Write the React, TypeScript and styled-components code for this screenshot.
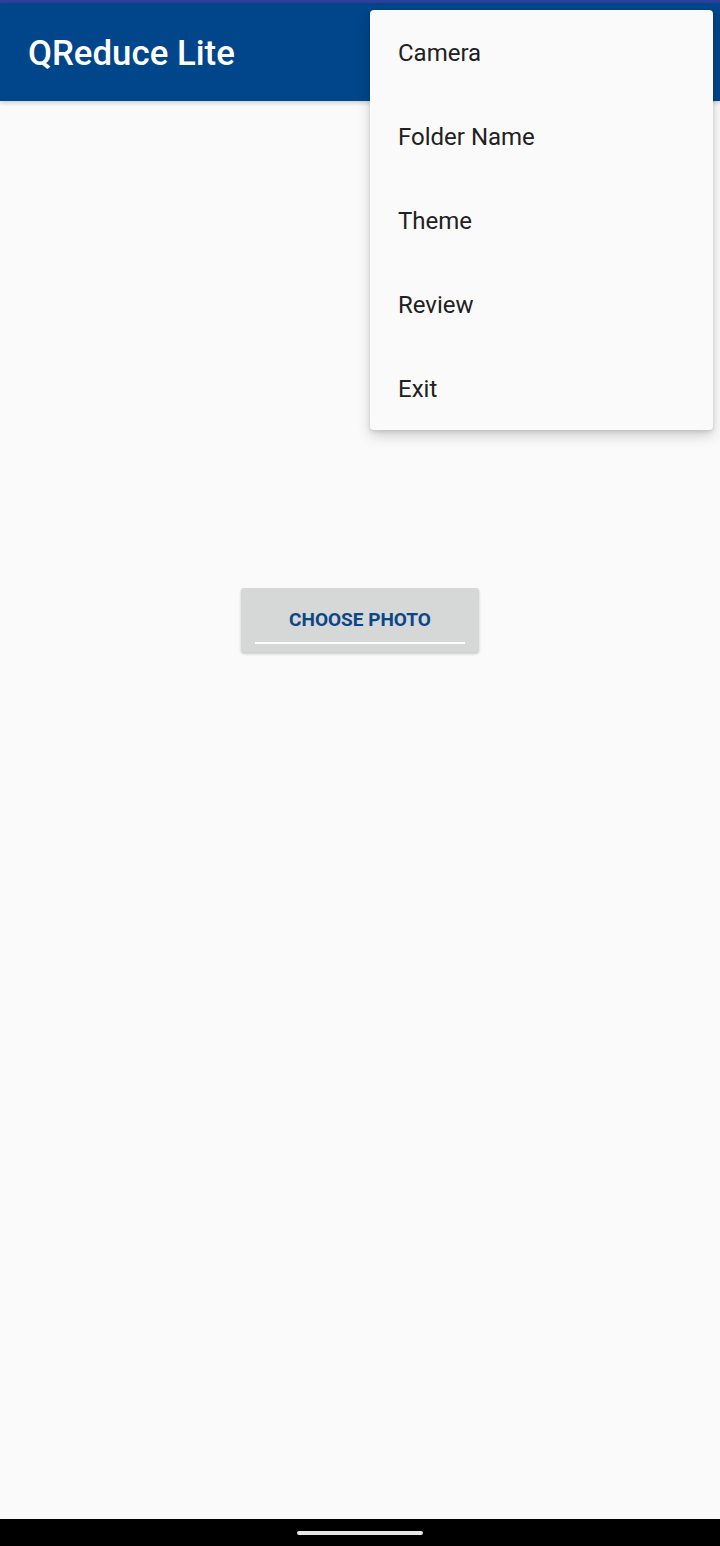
import * as React from "react";
import styled, { createGlobalStyle } from "styled-components";

const menuItems = ["Camera", "Folder Name", "Theme", "Review", "Exit"];

function App() {
  return (
    <>
      <GlobalStyle />
      <Screen>
        <StatusBar />
        <AppBar>
          <Title>QReduce Lite</Title>
        </AppBar>
        <Content>
          <ChooseButton>
            <ButtonText>CHOOSE PHOTO</ButtonText>
            <ButtonLine />
          </ChooseButton>
        </Content>
        <NavBar>
          <HomeIndicator />
        </NavBar>
        <Menu>
          {menuItems.map((item) => (
            <MenuItem key={item}>{item}</MenuItem>
          ))}
        </Menu>
      </Screen>
    </>
  );
}

export default App;

const GlobalStyle = createGlobalStyle`
  html, body {
    margin: 0;
    padding: 0;
    background: #fafafa;
  }
  body {
    font-family: Roboto, "Liberation Sans", sans-serif;
  }
`;

const Screen = styled.div`
  position: relative;
  display: flex;
  flex-direction: column;
  width: 720px;
  height: 1546px;
  overflow: hidden;
  background: #fafafa;
`;

const StatusBar = styled.div`
  height: 3px;
  background: #2d3f9c;
`;

const AppBar = styled.header`
  display: flex;
  align-items: center;
  height: 98px;
  padding: 0 28px;
  background: #01468a;
  box-shadow: 0 2px 4px rgba(0, 0, 0, 0.18);
  z-index: 1;
`;

const Title = styled.h1`
  margin: 2px 0 0;
  font-family: Roboto, "Liberation Sans", sans-serif;
  font-size: 34.8px;
  font-weight: 500;
  color: #ffffff;
`;

const Content = styled.main`
  flex: 1;
  display: flex;
  flex-direction: column;
  align-items: center;
  padding-top: 487px;
`;

const ChooseButton = styled.button`
  position: relative;
  display: flex;
  align-items: center;
  justify-content: center;
  width: 238px;
  height: 64px;
  padding: 0;
  border: none;
  border-radius: 3px;
  background: #d6d7d7;
  box-shadow: 0 2px 3px rgba(0, 0, 0, 0.2);
  cursor: pointer;
`;

const ButtonText = styled.span`
  margin-bottom: 1px;
  font-family: Roboto, "Liberation Sans", sans-serif;
  font-size: 19px;
  font-weight: 700;
  color: #0b4687;
`;

const ButtonLine = styled.span`
  position: absolute;
  left: 14px;
  right: 14px;
  bottom: 8px;
  height: 2px;
  background: #ffffff;
`;

const NavBar = styled.div`
  display: flex;
  justify-content: center;
  align-items: center;
  height: 27px;
  background: #000000;
`;

const HomeIndicator = styled.div`
  width: 126px;
  height: 4px;
  border-radius: 2px;
  background: #e6e6e6;
`;

const Menu = styled.ul`
  position: absolute;
  top: 10px;
  left: 370px;
  width: 343px;
  margin: 0;
  padding: 0;
  list-style: none;
  background: #fafafa;
  border-radius: 4px;
  box-shadow: 0 6px 14px rgba(0, 0, 0, 0.16), 0 2px 4px rgba(0, 0, 0, 0.12);
  z-index: 2;
`;

const MenuItem = styled.li`
  display: flex;
  align-items: center;
  height: 84px;
  padding: 2px 28px 0;
  box-sizing: border-box;
  font-family: Roboto, "Liberation Sans", sans-serif;
  font-size: 24px;
  color: #212121;
`;
